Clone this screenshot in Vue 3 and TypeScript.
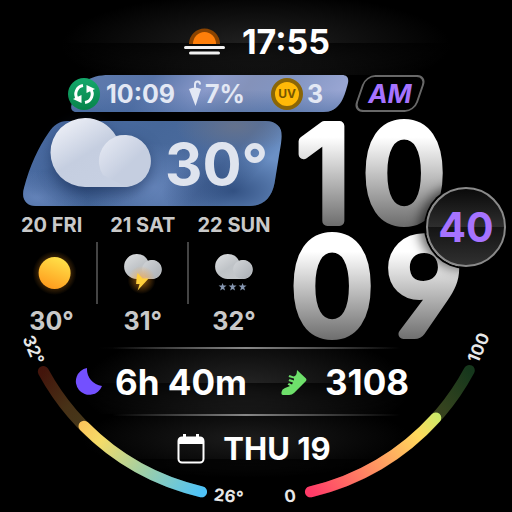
<script setup lang="ts">
interface Forecast {
  day: string
  temp: string
  kind: 'sun' | 'storm' | 'snow'
}

interface Gauge {
  id: string
  track: string
  value: string
}

const sunset = '17:55'
const hours = '10'
const minutes = ['0', '9']
const seconds = '40'

const forecast: Forecast[] = [
  { day: '20 FRI', temp: '30°', kind: 'sun' },
  { day: '21 SAT', temp: '31°', kind: 'storm' },
  { day: '22 SUN', temp: '32°', kind: 'snow' },
]

const CENTER = 256
const RADIUS = 242

function arc(from: number, to: number): string {
  const point = (deg: number): string => {
    const rad = (deg * Math.PI) / 180
    return `${(CENTER + RADIUS * Math.cos(rad)).toFixed(1)} ${(CENTER + RADIUS * Math.sin(rad)).toFixed(1)}`
  }
  return `M${point(from)} A${RADIUS} ${RADIUS} 0 0 ${to > from ? 1 : 0} ${point(to)}`
}

const gauges: Gauge[] = [
  { id: 'temp', track: arc(103, 151.5), value: arc(103, 135.3) },
  { id: 'battery', track: arc(77, 28.2), value: arc(77, 42) },
]
</script>

<template>
  <main class="face">
    <svg class="gauges" viewBox="0 0 512 512" aria-hidden="true">
      <defs>
        <linearGradient id="temp" gradientUnits="userSpaceOnUse" x1="201" y1="492" x2="43" y2="372">
          <stop offset="0" stop-color="#4fc3f7" />
          <stop offset=".3" stop-color="#a0cfa5" />
          <stop offset=".56" stop-color="#f5dc68" />
          <stop offset=".8" stop-color="#ffb051" />
          <stop offset="1" stop-color="#f04a28" />
        </linearGradient>
        <linearGradient id="battery" gradientUnits="userSpaceOnUse" x1="311" y1="492" x2="470" y2="371">
          <stop offset="0" stop-color="#ff3b68" />
          <stop offset=".3" stop-color="#ff8b62" />
          <stop offset=".6" stop-color="#ffd95c" />
          <stop offset=".78" stop-color="#bdf06c" />
          <stop offset="1" stop-color="#4cc564" />
        </linearGradient>
      </defs>
      <g v-for="g in gauges" :key="g.id" fill="none" stroke-width="11" stroke-linecap="round" :stroke="`url(#${g.id})`">
        <path :d="g.track" opacity=".28" />
        <path :d="g.value" />
      </g>
      <g class="gauge-label">
        <text transform="translate(28 352) rotate(67)">32°</text>
        <text transform="translate(228 502) rotate(6)">26°</text>
        <text transform="translate(291 502) rotate(-8)">0</text>
        <text transform="translate(484 350) rotate(-67)">100</text>
      </g>
    </svg>

    <header class="sunset">
      <svg width="44" height="30" viewBox="0 0 44 30" aria-hidden="true">
        <path d="M7 17a15.500 15.500 0 0 1 31 0z" fill="#8a4300" />
        <path d="M11 17a11.500 12 0 0 1 23 0z" fill="#ff7f0a" />
        <path d="M3.500 20.500h38M8.500 26h28" stroke="#f2f2f2" stroke-width="3" stroke-linecap="round" />
      </svg>
      <time>{{ sunset }}</time>
    </header>

    <section class="top">
      <div class="info">
        <svg class="shape" viewBox="0 0 278 37" preserveAspectRatio="none" aria-hidden="true">
          <defs>
            <linearGradient id="info-bg" x1="0" x2="1" y1="0" y2=".1">
              <stop offset="0" stop-color="#5f7caf" />
              <stop offset=".3" stop-color="#5874a8" />
              <stop offset=".52" stop-color="#8b9bcb" />
              <stop offset=".66" stop-color="#8492ba" />
              <stop offset=".8" stop-color="#8295c2" />
              <stop offset="1" stop-color="#98a5d2" />
            </linearGradient>
            <linearGradient id="info-shade" x1="0" x2="0" y1="0" y2="1">
              <stop offset=".4" stop-color="#3c6299" stop-opacity="0" />
              <stop offset="1" stop-color="#3c6299" stop-opacity=".5" />
            </linearGradient>
          </defs>
          <path d="M38 0H271C276 0 278 3 277 8C273 24 268 37 252 37H6C1 37 -1 34 1 28C8 8 18 0 38 0z" fill="url(#info-bg)" />
          <path d="M38 0H271C276 0 278 3 277 8C273 24 268 37 252 37H6C1 37 -1 34 1 28C8 8 18 0 38 0z" fill="url(#info-shade)" />
        </svg>
        <svg class="sync" width="34" height="34" viewBox="0 0 34 34" aria-hidden="true">
          <defs>
            <linearGradient id="sync-bg" x1="0" x2="0" y1="0" y2="1">
              <stop offset="0" stop-color="#14a86b" />
              <stop offset="1" stop-color="#07844b" />
            </linearGradient>
          </defs>
          <circle cx="17" cy="17" r="16" fill="url(#sync-bg)" />
          <g fill="none" stroke="#fff" stroke-width="3">
            <path d="M16 8.500A8.500 8.500 0 0 0 10.500 22" />
            <path d="M18 25.500A8.500 8.500 0 0 0 23.500 12" />
          </g>
          <path d="M6 22L14.500 18L14.500 26zM28 12L19.500 16L19.500 8z" fill="#fff" />
        </svg>
        <span class="updated">10:09</span>
        <svg class="umbrella" width="14" height="28" viewBox="0 0 14 28" aria-hidden="true">
          <path d="M1 9Q7 6 13 9L7.500 26z" fill="#e3e8f4" />
          <path d="M7 9V4.500Q7 1.500 9.500 1.500T12 4.500" fill="none" stroke="#e3e8f4" stroke-width="2" />
        </svg>
        <span class="rain">7%</span>
        <span class="uv">UV</span>
        <span>3</span>
      </div>
      <div class="meridiem">AM</div>
    </section>

    <section class="middle">
      <div class="weather">
        <div class="current">
          <svg class="shape" viewBox="0 0 258 85" preserveAspectRatio="none" aria-hidden="true">
            <defs>
              <linearGradient id="card-bg" x1="0" x2="1" y1="0" y2=".3">
                <stop offset="0" stop-color="#4a6ba3" />
                <stop offset=".5" stop-color="#466799" />
                <stop offset=".85" stop-color="#4c6c9f" />
                <stop offset="1" stop-color="#6b90c5" />
              </linearGradient>
              <radialGradient id="card-light">
                <stop offset="0" stop-color="#6b8ac0" stop-opacity=".8" />
                <stop offset="1" stop-color="#6b8ac0" stop-opacity="0" />
              </radialGradient>
              <radialGradient id="card-dark">
                <stop offset="0" stop-color="#1c3868" stop-opacity=".7" />
                <stop offset="1" stop-color="#1c3868" stop-opacity="0" />
              </radialGradient>
              <radialGradient id="card-grey">
                <stop offset="0" stop-color="#6b7489" stop-opacity=".8" />
                <stop offset="1" stop-color="#6b7489" stop-opacity="0" />
              </radialGradient>
              <clipPath id="card-clip">
                <path d="M44 0H242C254 0 260 8 258 19L251 62C248 77 240 85 226 85H13C3 85 -2 78 1 67C7 44 15 27 26 11C31 4 36 0 44 0z" />
              </clipPath>
            </defs>
            <g clip-path="url(#card-clip)">
              <rect width="258" height="85" fill="url(#card-bg)" />
              <ellipse cx="212" cy="5" rx="60" ry="28" fill="url(#card-grey)" />
              <ellipse cx="130" cy="66" rx="70" ry="44" fill="url(#card-light)" />
              <ellipse cx="15" cy="76" rx="50" ry="26" fill="url(#card-light)" />
              <ellipse cx="62" cy="64" rx="60" ry="24" fill="url(#card-dark)" opacity=".6" />
              <ellipse cx="210" cy="70" rx="72" ry="38" fill="url(#card-dark)" />
            </g>
          </svg>
          <svg class="cloud" width="104" height="72" viewBox="0 0 104 72" aria-hidden="true">
            <defs>
              <linearGradient id="cloud-a" x1="0" y1="0" x2=".7" y2=".8">
                <stop offset="0" stop-color="#f6f7fc" />
                <stop offset=".6" stop-color="#c5cee0" />
                <stop offset="1" stop-color="#c7d0e2" />
              </linearGradient>
              <linearGradient id="cloud-b" x1="0" y1="0" x2=".55" y2=".6">
                <stop offset="0" stop-color="#e9ecf5" />
                <stop offset="1" stop-color="#c5cee0" />
              </linearGradient>
            </defs>
            <path d="M36 1A35 35 0 0 1 67 19A26 26 0 1 1 77 70H36A34.500 34.500 0 0 1 36 1z" fill="url(#cloud-a)" />
            <path d="M54 58A26 26 0 1 1 77 70z" fill="url(#cloud-b)" />
          </svg>
          <strong>30°</strong>
        </div>

        <ul class="forecast">
          <li v-for="f in forecast" :key="f.day">
            <span class="day">{{ f.day }}</span>
            <svg width="48" height="62" viewBox="0 0 48 62" aria-hidden="true">
              <defs>
                <linearGradient id="sun-fill" x1=".7" y1="0" x2=".3" y2="1">
                  <stop offset="0" stop-color="#ffe34a" />
                  <stop offset="1" stop-color="#ff9a1c" />
                </linearGradient>
                <radialGradient id="sun-glow">
                  <stop offset=".6" stop-color="#ff9a1c" stop-opacity=".3" />
                  <stop offset="1" stop-color="#ff9a1c" stop-opacity="0" />
                </radialGradient>
                <radialGradient id="bolt-glow">
                  <stop offset="0" stop-color="#ff9a1c" stop-opacity=".6" />
                  <stop offset="1" stop-color="#ff9a1c" stop-opacity="0" />
                </radialGradient>
                <linearGradient id="small-cloud" x1="0" y1="0" x2="1" y2="1">
                  <stop offset="0" stop-color="#dfe1e3" />
                  <stop offset=".45" stop-color="#bfc3c7" />
                  <stop offset="1" stop-color="#c9cccf" />
                </linearGradient>
                <linearGradient id="small-puff" x1="0" y1="0" x2="1" y2="1">
                  <stop offset="0" stop-color="#d3d6d9" />
                  <stop offset="1" stop-color="#a9aeb4" />
                </linearGradient>
              </defs>
              <g v-if="f.kind === 'sun'">
                <circle cx="28" cy="31" r="22" fill="url(#sun-glow)" />
                <circle cx="28" cy="31" r="16" fill="url(#sun-fill)" />
              </g>
              <g v-else>
                <path d="M19 12A12.500 12.500 0 0 1 30.500 19A9.500 9.500 0 1 1 34 37H19A12.500 12.500 0 0 1 19 12z" fill="url(#small-cloud)" />
                <circle cx="34" cy="27.500" r="9.500" fill="url(#small-puff)" />
                <g v-if="f.kind === 'storm'">
                  <circle cx="24" cy="38" r="14" fill="url(#bolt-glow)" />
                  <path d="M19 36L20 31L25 36.500H31L20 48.500L22 42H18.500z" fill="#ffcf3c" />
                </g>
                <g v-else fill="#8596b0">
                  <path v-for="x in [14, 24, 34]" :key="x" :d="`M${x} 41l1 2.500h3l-2.500 2l1 3l-2.500 -1.500l-2.500 1.500l1 -3l-2.500 -2h3z`" />
                </g>
              </g>
            </svg>
            <span class="temp">{{ f.temp }}</span>
          </li>
        </ul>
      </div>

      <div class="clock">
        <svg viewBox="0 0 230 226">
          <defs>
            <linearGradient id="hour-fill" gradientUnits="userSpaceOnUse" x1="0" y1="0" x2="0" y2="108">
              <stop offset=".15" stop-color="#fff" />
              <stop offset="1" stop-color="#686868" />
            </linearGradient>
            <linearGradient id="minute-fill" gradientUnits="userSpaceOnUse" x1="0" y1="114" x2="0" y2="222">
              <stop offset=".15" stop-color="#fff" />
              <stop offset="1" stop-color="#686868" />
            </linearGradient>
          </defs>
          <text x="42 122" y="100" fill="url(#hour-fill)" stroke="url(#hour-fill)">{{ hours }}</text>
          <text y="213" fill="url(#minute-fill)" stroke="url(#minute-fill)"><tspan x="50">{{ minutes[0] }}</tspan><tspan x="142" class="nine">{{ minutes[1] }}</tspan></text>
        </svg>
        <span class="seconds">{{ seconds }}</span>
      </div>
    </section>

    <section class="stats">
      <svg width="28" height="28" viewBox="0 0 28 28" aria-hidden="true">
        <path d="M12 0A17 17 0 0 0 27 18A13.500 13.500 0 1 1 12 0z" fill="#7350ff" />
      </svg>
      <span class="sleep">6h 40m</span>
      <svg width="26" height="26" viewBox="0 0 26 26" aria-hidden="true">
        <path d="M16 1L25 9.500Q26 10.500 25 12L13 24Q11 26 8 26H2Q0 26 .5 23Q1 20 4 19L9 17L6.500 15.500L8 14L11 15.500L12 13.500L7.500 12L8.500 10L13 11.500V9.500L7.500 8L8.500 6L12.500 7.500Q16 7 16 1z" fill="#6ee06b" />
      </svg>
      <span class="steps">3108</span>
    </section>

    <section class="date">
      <svg width="28" height="31" viewBox="0 0 28 31" aria-hidden="true">
        <rect x="1.500" y="4.500" width="25" height="25" rx="3.500" fill="none" stroke="#fff" stroke-width="2" />
        <path d="M1 11V8Q1 4 5 4H6V1H9V4H19V1H22V4H23Q27 4 27 8V11z" fill="#fff" />
      </svg>
      <time>THU 19</time>
    </section>
  </main>
</template>

<style>
body {
  background: #000;
}
</style>

<style scoped>
.face {
  position: relative;
  min-height: 100vh;
  box-sizing: border-box;
  overflow: hidden;
  background: #000;
  color: #fff;
  font-family: Inter, Lato, sans-serif;
  font-weight: 700;
}

.gauges {
  position: absolute;
  inset: 0;
  width: 100%;
}

.gauge-label {
  font-size: 17px;
  fill: #e8e8e8;
  text-anchor: middle;
}

.sunset {
  display: flex;
  align-items: center;
  justify-content: center;
  gap: 16px;
  height: 75px;
  padding-top: 9px;
  box-sizing: border-box;
  font-size: 34px;
  line-height: 40px;
  background:
    linear-gradient(transparent 57%, rgb(0 0 0 / 70%) 57%, transparent),
    radial-gradient(ellipse 38% 70% at 50% 60%, #222, transparent);
}

.top {
  display: flex;
  gap: 10px;
  padding-left: 71px;
}

.info {
  position: relative;
  display: flex;
  align-items: center;
  width: 278px;
  height: 37px;
  color: #e3e8f4;
  font-size: 25px;
  line-height: 30px;
}

.info > * {
  position: relative;
}

.info > .shape,
.current > .shape {
  position: absolute;
  inset: 0;
  width: 100%;
  height: 100%;
}

.sync {
  margin: 0 5px 0 -4px;
}

.updated {
  flex: 0 0 82px;
}

.umbrella {
  margin-right: 3px;
}

.rain {
  flex: 0 0 66px;
}

.uv {
  display: flex;
  align-items: center;
  justify-content: center;
  width: 24px;
  height: 24px;
  margin-right: 4px;
  border: 4px solid #8a6607;
  border-radius: 50%;
  background: #ffba08;
  color: #765600;
  font-size: 12px;
}

.meridiem {
  position: relative;
  display: flex;
  align-items: center;
  justify-content: center;
  width: 62px;
  color: #a673ff;
  font-size: 26px;
  font-style: italic;
  line-height: 30px;
}

.meridiem::before {
  content: "";
  position: absolute;
  inset: 0;
  border: 2px solid #686868;
  border-radius: 10px;
  transform: skewX(-19deg);
}

.middle {
  display: grid;
  grid-template-columns: 55fr 45fr;
  padding-top: 9px;
}

.current {
  position: relative;
  display: flex;
  align-items: center;
  height: 85px;
  margin-left: 23px;
  color: #dfe4ee;
}

.current .cloud {
  position: relative;
  margin: -22px 12px 0 26px;
  filter: drop-shadow(0 5px 7px rgb(20 40 80 / 50%));
}

.current strong {
  position: relative;
  font-size: 58px;
  font-weight: 700;
  line-height: 64px;
}

.forecast {
  display: grid;
  grid-template-columns: repeat(3, 1fr);
  margin: 0;
  padding: 7px 2px 0 6px;
  list-style: none;
  color: #c9c9c9;
}

.forecast li {
  display: flex;
  flex-direction: column;
  align-items: center;
}

.forecast svg {
  width: 100%;
  margin: 5px 0 3px;
  border-right: 2px solid #444;
}

.forecast li:last-child svg {
  border-color: transparent;
}

.day {
  font-size: 20px;
  line-height: 24px;
}

.temp {
  font-size: 25px;
  line-height: 28px;
}

.clock {
  position: relative;
}

.clock svg {
  display: block;
  width: 100%;
  overflow: visible;
}

.clock text {
  font-size: 131px;
  font-weight: 400;
  text-anchor: middle;
  stroke-width: 10px;
  stroke-linejoin: round;
}

.nine {
  font-family: Lato, sans-serif;
}

.seconds {
  position: absolute;
  top: 66px;
  right: 6px;
  display: flex;
  align-items: center;
  justify-content: center;
  width: 76px;
  height: 76px;
  border: 2px solid #8a8a8a;
  border-radius: 50%;
  background: linear-gradient(#0a0a0a, #2e2e2e 50%, #141414 50%, #303030);
  box-shadow: 0 0 0 2px #000, -5px 0 12px 2px rgb(0 0 0 / 60%);
  color: #a673ff;
  font-size: 41px;
}

.stats,
.date {
  display: flex;
  align-items: center;
  justify-content: center;
  height: 67px;
  border-top: 2px solid;
  border-image: linear-gradient(90deg, transparent 22%, #888 48%, transparent 78%) 1;
  box-sizing: border-box;
}

.stats {
  gap: 12px;
  padding-right: 28px;
  background:
    linear-gradient(transparent 52%, rgb(0 0 0 / 70%) 52%, transparent),
    radial-gradient(ellipse 32% 90% at 48% 60%, #262626, transparent);
  font-size: 35px;
}

.sleep {
  margin-right: 22px;
}

.steps {
  margin-left: 6px;
}

.date {
  gap: 18px;
  padding-right: 4px;
  background:
    linear-gradient(transparent 66%, rgb(0 0 0 / 70%) 66%, transparent),
    radial-gradient(ellipse 32% 60% at 48% 35%, #1c1c1c, transparent);
  font-size: 31px;
}
</style>
